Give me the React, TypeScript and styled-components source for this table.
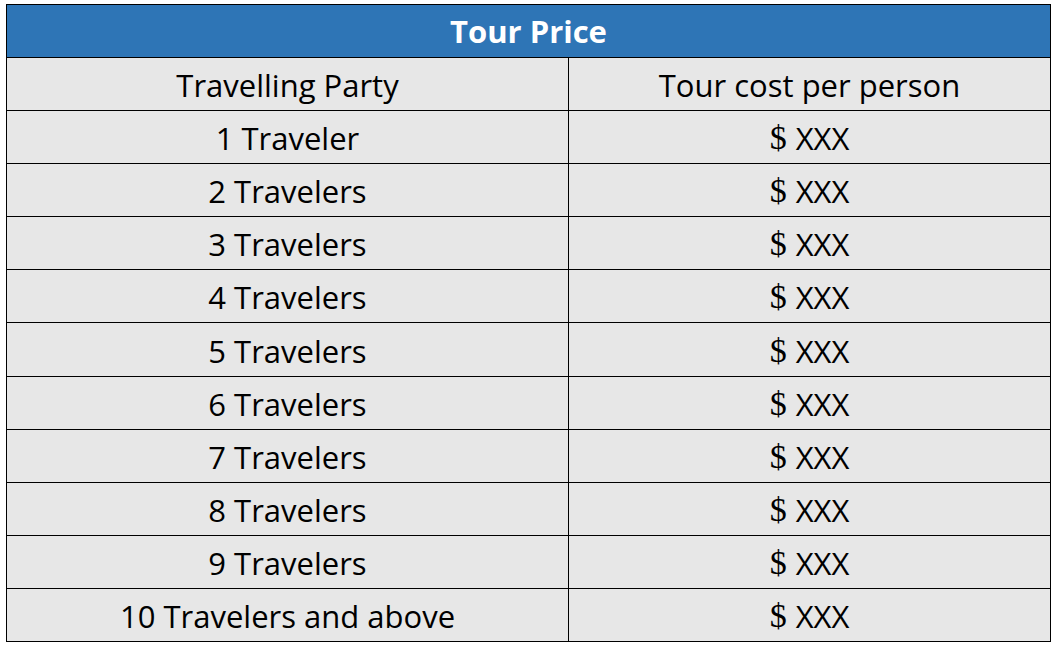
import React from "react";
import styled, { createGlobalStyle } from "styled-components";

const Global = createGlobalStyle`
  html, body { margin: 0; padding: 0; background: #ffffff; }
  body { font-family: "Open Sans", "Noto Sans", sans-serif; }
`;

const Page = styled.div`
  padding: 4px 0 0 6px;
`;

const Table = styled.div`
  box-sizing: border-box;
  width: 1045px;
  height: 638px;
  display: grid;
  grid-template-columns: 561px 1fr;
  grid-template-rows: repeat(12, 1fr);
  gap: 1px;
  background: #000;
  border: 1px solid #000;
`;

const TitleCell = styled.div`
  grid-column: 1 / span 2;
  background: #2e75b6;
  color: #ffffff;
  font-family: "Open Sans", "Noto Sans", sans-serif;
  font-weight: 700;
  font-size: 31px;
  display: flex;
  align-items: center;
  justify-content: center;
  line-height: 1;
  padding-top: 1px;
`;

const Cell = styled.div`
  background: #e7e7e7;
  color: #000;
  font-family: "Open Sans", "Noto Sans", sans-serif;
  font-size: 31px;
  display: flex;
  align-items: center;
  justify-content: center;
  line-height: 1;
  padding-top: 3px;
  white-space: nowrap;
`;

const Dollar = styled.span`
  font-family: "Liberation Serif", "DejaVu Serif", serif;
  font-size: 34px;
  margin-right: 9px;
  margin-top: -1px;
`;

const rows = [
  "1 Traveler",
  "2 Travelers",
  "3 Travelers",
  "4 Travelers",
  "5 Travelers",
  "6 Travelers",
  "7 Travelers",
  "8 Travelers",
  "9 Travelers",
  "10 Travelers and above",
];

export default function App() {
  return (
    <>
      <Global />
      <Page>
        <Table>
          <TitleCell>Tour Price</TitleCell>
          <Cell>Travelling Party</Cell>
          <Cell>Tour cost per person</Cell>
          {rows.map((r) => (
            <React.Fragment key={r}>
              <Cell>{r}</Cell>
              <Cell>
                <Dollar>$</Dollar>XXX
              </Cell>
            </React.Fragment>
          ))}
        </Table>
      </Page>
    </>
  );
}
